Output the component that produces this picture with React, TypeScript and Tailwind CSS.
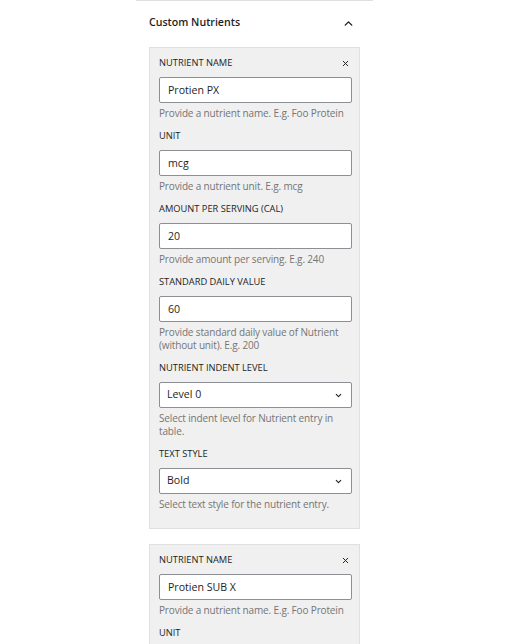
import React from 'react';

type Field = { kind: 'input' | 'select'; label: string; value: string; help: string };

const ChevronDown = () => (
  <svg width="9" height="9" viewBox="0 0 24 24" fill="none" stroke="#1e1e1e" strokeWidth="2.8" strokeLinecap="round" strokeLinejoin="round">
    <path d="M6 9l6 6 6-6" />
  </svg>
);

const ChevronUp = () => (
  <svg width="13" height="13" viewBox="0 0 24 24" fill="none" stroke="#1e1e1e" strokeWidth="2.6" strokeLinecap="round" strokeLinejoin="round">
    <path d="M6 15l6-6 6 6" />
  </svg>
);

const CloseIcon = () => (
  <svg width="9" height="9" viewBox="0 0 24 24" fill="none" stroke="#1e1e1e" strokeWidth="2.6" strokeLinecap="round">
    <path d="M6 6l12 12M18 6L6 18" />
  </svg>
);

const FieldRow: React.FC<{ field: Field; first?: boolean }> = ({ field, first }) => (
  <div className="mb-[9px]">
    <div className="flex items-center justify-between h-[14px] mb-[7px]">
      <span className="text-[9.3px] leading-[14px] font-medium uppercase text-[#1e1e1e]">{field.label}</span>
      {first && (
        <button className="mr-[2px] flex items-center justify-center" aria-label="Remove nutrient">
          <CloseIcon />
        </button>
      )}
    </div>
    {field.kind === 'input' ? (
      <input
        readOnly
        value={field.value}
        className="block w-full h-[26px] px-[8px] text-[10.6px] text-[#1e1e1e] bg-white border border-[#8c8f94] rounded-[2px] outline-none"
      />
    ) : (
      <div className="flex items-center justify-between w-full h-[26px] pl-[7px] pr-[8px] text-[10.6px] text-[#1e1e1e] bg-white border border-[#8c8f94] rounded-[2px]">
        <span>{field.value}</span>
        <ChevronDown />
      </div>
    )}
    <p className="mt-[4px] text-[10px] tracking-[-0.15px] leading-[13px] text-[#757575]">{field.help}</p>
  </div>
);

const firstNutrient: Field[] = [
  { kind: 'input', label: 'Nutrient Name', value: 'Protien PX', help: 'Provide a nutrient name. E.g. Foo Protein' },
  { kind: 'input', label: 'Unit', value: 'mcg', help: 'Provide a nutrient unit. E.g. mcg' },
  { kind: 'input', label: 'Amount Per Serving (CAL)', value: '20', help: 'Provide amount per serving. E.g. 240' },
  { kind: 'input', label: 'Standard Daily Value', value: '60', help: 'Provide standard daily value of Nutrient (without unit). E.g. 200' },
  { kind: 'select', label: 'Nutrient Indent Level', value: 'Level 0', help: 'Select indent level for Nutrient entry in table.' },
  { kind: 'select', label: 'Text Style', value: 'Bold', help: 'Select text style for the nutrient entry.' },
];

const secondNutrient: Field[] = [
  { kind: 'input', label: 'Nutrient Name', value: 'Protien SUB X', help: 'Provide a nutrient name. E.g. Foo Protein' },
  { kind: 'input', label: 'Unit', value: 'mcg', help: 'Provide a nutrient unit. E.g. mcg' },
];

const NutrientCard: React.FC<{ fields: Field[] }> = ({ fields }) => (
  <div className="bg-[#f0f0f0] border border-[#e0e0e0] pt-[8px] pb-[8px] pl-[9px] pr-[7px]">
    {fields.map((f, i) => (
      <FieldRow key={i} field={f} first={i === 0} />
    ))}
  </div>
);

export default function App() {
  return (
    <div className="w-[510px] h-[644px] overflow-hidden bg-white" style={{ fontFamily: '"Open Sans", "Noto Sans", sans-serif' }}>
      <div className="ml-[136px] w-[237px] border-t border-[#e0e0e0]">
        <div className="flex items-center justify-between h-[44px] pl-[13px] pr-[18px]">
          <span className="text-[10.6px] font-semibold text-[#1e1e1e]">Custom Nutrients</span>
          <ChevronUp />
        </div>
        <div className="px-[13px] mt-[2px] flex flex-col gap-[15px]">
          <NutrientCard fields={firstNutrient} />
          <NutrientCard fields={secondNutrient} />
        </div>
      </div>
    </div>
  );
}
